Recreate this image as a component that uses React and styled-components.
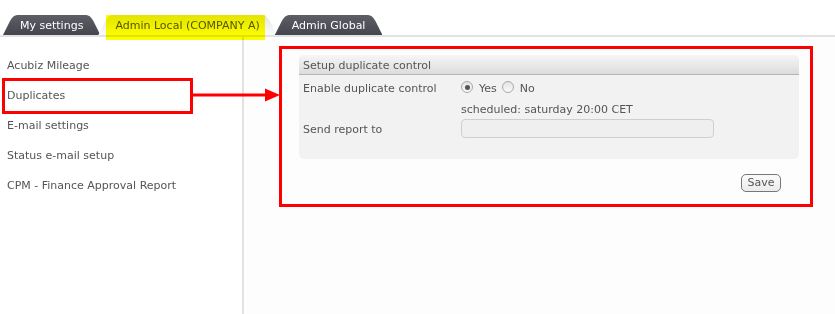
import React from "react";
import styled, { createGlobalStyle, css } from "styled-components";

const GlobalStyle = createGlobalStyle`
  html, body { margin: 0; padding: 0; background: #ffffff; }
  body {
    font-family: "DejaVu Sans", Verdana, sans-serif;
    font-size: 11px;
    color: #555555;
  }
  * { box-sizing: border-box; }
`;

const Page = styled.div`
  width: 835px;
  height: 314px;
  display: flex;
  flex-direction: column;
  overflow: hidden;
  background: #ffffff;
`;

const TabBar = styled.div`
  display: flex;
  align-items: flex-end;
  height: 37px;
  padding: 15px 0 0 3px;
  border-bottom: 2px solid #e2e2e2;
`;

const Tab = styled.div`
  position: relative;
  height: 20px;
  padding: 0 17px;
  display: flex;
  align-items: center;
  white-space: nowrap;
  & + & { margin-left: -2px; }

  &::before {
    content: "";
    position: absolute;
    inset: 0;
    z-index: 0;
    clip-path: polygon(
      0 100%, 7px 6px, 9px 3px, 11px 1px, 14px 0,
      calc(100% - 14px) 0, calc(100% - 11px) 1px, calc(100% - 9px) 3px, calc(100% - 7px) 6px, 100% 100%
    );
    ${(p) =>
      p.$active
        ? css`background: linear-gradient(#e4e4e4, #fbfbfb);`
        : css`background: linear-gradient(#5e5e66, #45454d);`}
  }
`;

const TabLabel = styled.span`
  position: relative;
  z-index: 1;
  color: ${(p) => (p.$active ? "#555555" : "#ffffff")};
  line-height: 20px;
  margin-top: 1px;
`;

const Highlight = styled.div`
  position: absolute;
  left: 8px;
  right: 12px;
  top: 0;
  bottom: -5px;
  z-index: 2;
  background: #ffff00;
  mix-blend-mode: multiply;
  pointer-events: none;
`;

const Body = styled.div`
  flex: 1;
  display: flex;
`;

const Sidebar = styled.nav`
  width: 244px;
  flex: none;
  border-right: 2px solid #e2e2e2;
  padding-top: 14px;
  display: flex;
  flex-direction: column;
`;

const MenuItem = styled.div`
  position: relative;
  height: 30px;
  line-height: 30px;
  padding-left: 7px;
  color: #555555;
  white-space: nowrap;
`;

const MarkBox = styled.div`
  position: absolute;
  left: 2px;
  top: -3px;
  width: 191px;
  height: 36px;
  border: 3px solid #ff0000;
  pointer-events: none;
`;

const Arrow = styled.svg`
  position: absolute;
  left: 193px;
  top: 7px;
  z-index: 3;
  overflow: visible;
`;

const Main = styled.main`
  flex: 1;
  background: #fdfdfd;
  padding: 9px 0 0 35px;
`;

const RedFrame = styled.div`
  width: 534px;
  height: 161px;
  border: 3px solid #ff0000;
  padding: 6px 11px 0 17px;
  display: flex;
  flex-direction: column;
`;

const Panel = styled.section`
  width: 500px;
  border-radius: 5px;
  background: #f2f2f2;
`;

const PanelHeader = styled.div`
  height: 20px;
  padding: 1px 0 0 4px;
  display: flex;
  align-items: center;
  border-radius: 5px 5px 0 0;
  background: linear-gradient(#f6f6f6, #dcdcdc);
  border-bottom: 1px solid #b4b4b4;
  color: #555555;
`;

const PanelBody = styled.div`
  padding: 5px 4px 21px;
  display: flex;
  flex-direction: column;
`;

const FormRow = styled.div`
  display: grid;
  grid-template-columns: 158px 1fr;
  align-items: center;
  height: ${(p) => p.$h}px;
  margin-top: ${(p) => p.$mt || 0}px;
`;

const FieldLabel = styled.div`
  color: #555555;
  white-space: nowrap;
  padding-top: 1px;
`;

const RadioGroup = styled.div`
  display: flex;
  align-items: center;
`;

const Radio = styled.span`
  width: 12px;
  height: 12px;
  border-radius: 50%;
  border: 1px solid #a8a8a8;
  background: linear-gradient(#e4e4e4, #fafafa);
  display: inline-flex;
  align-items: center;
  justify-content: center;
  margin-right: 6px;
  margin-top: -2px;
  &::after {
    content: "";
    width: 5px;
    height: 5px;
    border-radius: 50%;
    background: ${(p) => (p.$checked ? "#555555" : "transparent")};
  }
`;

const RadioText = styled.span`
  margin-right: 5px;
  color: #555555;
`;

const Note = styled.div`
  color: #555555;
  white-space: nowrap;
  padding-top: 1px;
`;

const TextInput = styled.div`
  width: 253px;
  height: 19px;
  border: 1px solid #cfcfcf;
  border-radius: 4px;
  background: #efefef;
`;

const Actions = styled.div`
  display: flex;
  justify-content: flex-end;
  padding-right: 18px;
  margin-top: 15px;
`;

const SaveButton = styled.button`
  width: 40px;
  height: 18px;
  padding: 0;
  border: 1px solid #777777;
  border-radius: 5px;
  background: linear-gradient(#fafafa, #ececec);
  font-family: inherit;
  font-size: 11px;
  color: #555555;
  line-height: 16px;
`;

const menu = [
  "Acubiz Mileage",
  "Duplicates",
  "E-mail settings",
  "Status e-mail setup",
  "CPM - Finance Approval Report",
];

export default function App() {
  return (
    <>
      <GlobalStyle />
      <Page>
        <TabBar>
          <Tab>
            <TabLabel>My settings</TabLabel>
          </Tab>
          <Tab $active>
            <TabLabel $active>Admin Local (COMPANY A)</TabLabel>
            <Highlight />
          </Tab>
          <Tab>
            <TabLabel>Admin Global</TabLabel>
          </Tab>
        </TabBar>
        <Body>
          <Sidebar>
            {menu.map((m) => (
              <MenuItem key={m}>
                {m}
                {m === "Duplicates" && (
                  <>
                    <MarkBox />
                    <Arrow width="87" height="14" viewBox="0 0 87 14">
                      <line x1="0" y1="7" x2="73" y2="7" stroke="#ff0000" strokeWidth="3" />
                      <polygon points="72,0.5 87,7 72,13.5" fill="#ff0000" />
                    </Arrow>
                  </>
                )}
              </MenuItem>
            ))}
          </Sidebar>
          <Main>
            <RedFrame>
              <Panel>
                <PanelHeader>Setup duplicate control</PanelHeader>
                <PanelBody>
                  <FormRow $h={16}>
                    <FieldLabel>Enable duplicate control</FieldLabel>
                    <RadioGroup>
                      <Radio $checked />
                      <RadioText>Yes</RadioText>
                      <Radio />
                      <RadioText>No</RadioText>
                    </RadioGroup>
                  </FormRow>
                  <FormRow $h={17} $mt={4}>
                    <span />
                    <Note>scheduled: saturday 20:00 CET</Note>
                  </FormRow>
                  <FormRow $h={19} $mt={2}>
                    <FieldLabel>Send report to</FieldLabel>
                    <TextInput />
                  </FormRow>
                </PanelBody>
              </Panel>
              <Actions>
                <SaveButton>Save</SaveButton>
              </Actions>
            </RedFrame>
          </Main>
        </Body>
      </Page>
    </>
  );
}
